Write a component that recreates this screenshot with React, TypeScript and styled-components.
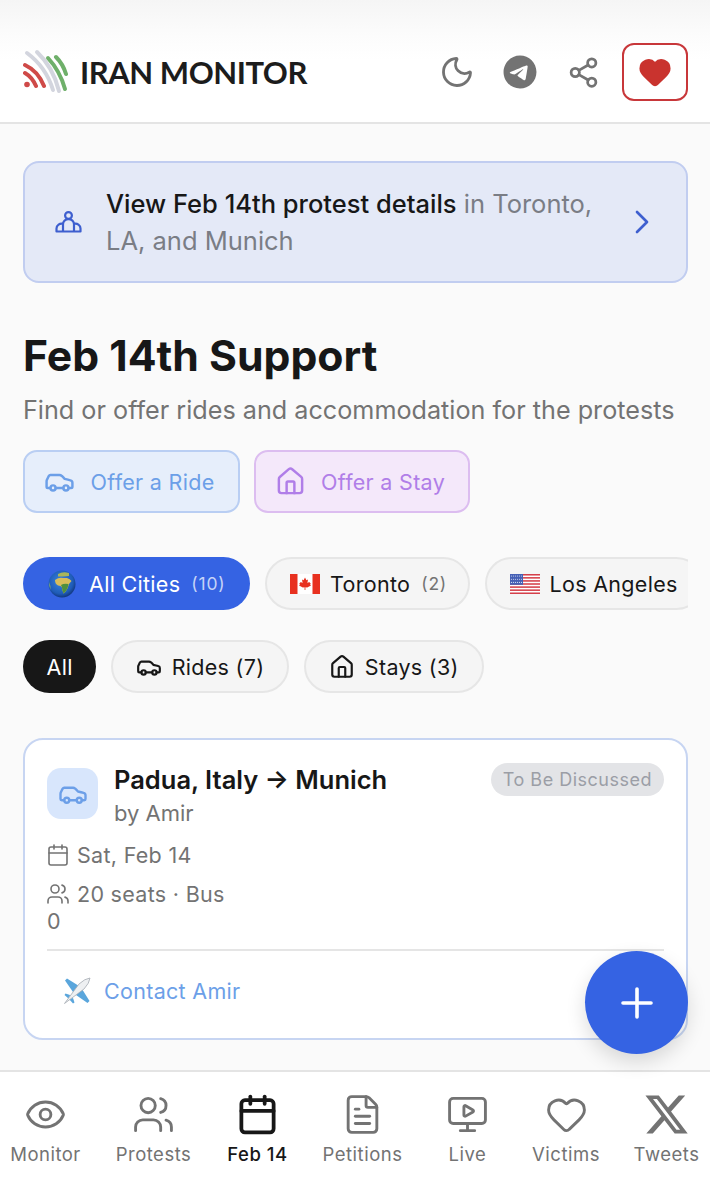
import React from 'react';
import styled, { createGlobalStyle } from 'styled-components';
import { Calendar, Car, ChevronRight, Eye, FileText, Heart, House, MonitorPlay, Moon, Plus, Share2, Users } from 'lucide-react';
import { FaTelegram, FaXTwitter } from 'react-icons/fa6';

const GlobalStyle = createGlobalStyle`
  html, body {
    margin: 0;
    padding: 0;
    background: #fafafa;
  }
  * {
    box-sizing: border-box;
  }
  svg {
    flex-shrink: 0;
  }
`;

const Page = styled.div`
  position: relative;
  width: 710px;
  height: 1200px;
  display: flex;
  flex-direction: column;
  overflow: hidden;
  background: #fafafa;
  font-family: Inter, "Liberation Sans", sans-serif;
  color: #171717;
`;

const Header = styled.header`
  height: 124px;
  flex-shrink: 0;
  display: flex;
  align-items: center;
  justify-content: space-between;
  padding: 22px 22px 0 23px;
  background: linear-gradient(#f5f5f5 0, #fcfcfc 36px, #fff 60px);
  border-bottom: 2px solid #e4e4e4;
`;

const Brand = styled.div`
  display: flex;
  align-items: center;
  gap: 12px;
`;

const BrandName = styled.span`
  font-family: Lato, sans-serif;
  font-size: 31px;
  font-weight: 700;
  letter-spacing: -0.45px;
  color: #1c1c1c;
`;

const HeaderActions = styled.div`
  display: flex;
  align-items: center;
`;

const HeaderIcon = styled.span`
  width: 30px;
  height: 38px;
  margin-right: 33px;
  display: flex;
  align-items: center;
  justify-content: center;
  color: #737373;

  &:nth-child(3) {
    margin-right: 24px;
  }
`;

const DonateButton = styled.button`
  width: 66px;
  height: 58px;
  display: flex;
  align-items: center;
  justify-content: center;
  padding: 0;
  background: #fff;
  border: 2px solid #c8373a;
  border-radius: 12px;
  color: #c9332e;
`;

const Main = styled.main`
  flex: 1;
  min-height: 0;
  padding: 37px 22px 0 23px;
`;

const Banner = styled.div`
  height: 122px;
  display: flex;
  align-items: center;
  padding: 0 24px 0 30px;
  background: #e4e9f7;
  border: 2px solid #c1cdf0;
  border-radius: 16px;
  color: #3e5fcf;
`;

const BannerText = styled.div`
  flex: 1;
  margin-left: 24px;
  font-size: 25.5px;
  line-height: 37px;
  color: #7a7d85;
`;

const BannerStrong = styled.span`
  font-weight: 500;
  color: #171717;
`;

const Title = styled.h1`
  margin: 48px 0 0;
  font-size: 42.7px;
  line-height: 50px;
  font-weight: 700;
  color: #171717;
`;

const Subtitle = styled.p`
  margin: 12px 0 0;
  font-size: 25.2px;
  line-height: 34px;
  color: #737373;
`;

const OfferRow = styled.div`
  display: flex;
  gap: 14px;
  margin-top: 23px;
`;

const OfferButton = styled.button<{ $tone: 'blue' | 'purple' }>`
  width: ${p => (p.$tone === 'blue' ? 217 : 216)}px;
  height: 63px;
  display: flex;
  align-items: center;
  justify-content: center;
  gap: 15px;
  padding: 0 4px 0 0;
  font-family: inherit;
  font-size: 21.5px;
  letter-spacing: 0.3px;
  border-radius: 14px;
  border: 2px solid ${p => (p.$tone === 'blue' ? '#b9cef3' : '#dcbdf0')};
  background: ${p => (p.$tone === 'blue' ? '#e6eefb' : '#f4e8fa')};
  color: ${p => (p.$tone === 'blue' ? '#6c9fe8' : '#b07ee8')};
`;

const CityRow = styled.div`
  display: flex;
  gap: 14.5px;
  margin-top: 44px;
  overflow: hidden;
`;

const TypeRow = styled.div`
  display: flex;
  gap: 14.5px;
  margin-top: 30px;
`;

const Chip = styled.button<{ $active?: 'blue' | 'black' }>`
  height: 53px;
  flex-shrink: 0;
  display: flex;
  align-items: center;
  gap: 10px;
  padding: 0 ${p => (p.$active === 'black' ? 21.5 : 23)}px;
  font-family: inherit;
  font-size: 21.5px;
  letter-spacing: 0.3px;
  border-radius: 27px;
  border: 2px solid ${p => (p.$active ? 'transparent' : '#e6e6e6')};
  background: ${p => (p.$active === 'blue' ? '#3563e3' : p.$active === 'black' ? '#171717' : '#f5f5f5')};
  color: ${p => (p.$active ? '#fff' : '#171717')};
`;

const ChipGlobe = styled.span`
  display: flex;
  margin-right: 3px;
`;

const ChipCount = styled.span<{ $light?: boolean }>`
  margin: 0 ${p => (p.$light ? 0 : -2)}px 0 1px;
  font-size: 17.5px;
  letter-spacing: 0.8px;
  color: ${p => (p.$light ? '#c6d3f7' : '#737373')};
`;

const Card = styled.article`
  position: relative;
  height: 302px;
  margin-top: 45px;
  padding: 23px 22px 0;
  background: #fff;
  border: 2px solid #c7d5f2;
  border-radius: 20px;
`;

const CardHead = styled.div`
  display: flex;
  align-items: flex-start;
  gap: 16px;
`;

const CardIcon = styled.div`
  width: 51px;
  height: 51px;
  margin-top: 5px;
  flex-shrink: 0;
  display: flex;
  align-items: center;
  justify-content: center;
  background: #d8e6fc;
  border-radius: 14px;
  color: #6c9fe8;
`;

const CardHeadText = styled.div`
  flex: 1;
`;

const CardTitle = styled.h2`
  margin: 0;
  font-size: 25.5px;
  line-height: 34px;
  font-weight: 600;
  color: #171717;
`;

const CardBy = styled.div`
  font-size: 22px;
  line-height: 32px;
  color: #737373;
`;

const StatusBadge = styled.span`
  height: 33px;
  padding: 0 12px;
  display: flex;
  align-items: center;
  font-size: 18px;
  letter-spacing: 0.5px;
  color: #9b9ea6;
  background: #e3e4e7;
  border-radius: 17px;
`;

const MetaRow = styled.div`
  display: flex;
  align-items: center;
  gap: 7px;
  margin: 8px 0 0 -1px;
  height: 31px;
  font-size: 21.5px;
  letter-spacing: 0.3px;
  color: #737373;

  &:nth-child(2) {
    margin-top: 10px;
  }
`;

const MetaRest = styled.div`
  font-size: 21.5px;
  line-height: 24px;
  color: #737373;
`;

const Divider = styled.div`
  height: 2px;
  margin-top: 16px;
  background: #e5e5e5;
`;

const ContactRow = styled.div`
  display: flex;
  align-items: center;
  gap: 12px;
  margin-top: 25px;
  padding-left: 15px;
  font-size: 21.5px;
  letter-spacing: 0.3px;
  color: #6c9fe8;
`;

const Fab = styled.button`
  position: absolute;
  left: 585px;
  top: 951px;
  width: 103px;
  height: 103px;
  display: flex;
  align-items: center;
  justify-content: center;
  padding: 0;
  border: none;
  border-radius: 50%;
  background: #3563e3;
  color: #fff;
  box-shadow: 0 8px 20px rgba(0, 0, 0, 0.14);
`;

const BottomNav = styled.nav`
  height: 130px;
  flex-shrink: 0;
  display: flex;
  padding-top: 19px;
  background: #fff;
  border-top: 2px solid #e4e4e4;
`;

const NavItem = styled.div<{ $width: number; $active?: boolean }>`
  width: ${p => p.$width}px;
  display: flex;
  flex-direction: column;
  align-items: center;
  gap: 5px;
  flex-shrink: 0;
  font-size: 18.5px;
  line-height: 24px;
  letter-spacing: 0.5px;
  font-weight: ${p => (p.$active ? 500 : 400)};
  color: ${p => (p.$active ? '#171717' : '#737373')};
`;

const NavGlyph = styled.span`
  height: 46px;
  display: flex;
  align-items: center;
  justify-content: center;
`;

function LogoMark() {
  return (
    <svg width="45" height="46" viewBox="22 50 45 46" fill="none" strokeWidth="4" strokeLinecap="round">
      <circle cx="26" cy="85.5" r="2.8" fill="#cf4a48" />
      <path d="M24 74 Q31 78 35 87" stroke="#cf4a48" />
      <path d="M24 66 Q37 72 43 87" stroke="#cf4a48" />
      <path d="M26 54 Q45 68 52 91" stroke="#d3d5de" />
      <path d="M36 53 Q52 68 58 92" stroke="#d3d5de" />
      <path d="M47 59 Q59 72 64 90" stroke="#6fb06a" />
      <path d="M55 58 Q62 65 65 75" stroke="#6fb06a" />
    </svg>
  );
}

function GatherIcon() {
  return (
    <svg width="27" height="22" viewBox="0 0 27 22" fill="none" stroke="currentColor" strokeWidth="2.2" strokeLinejoin="round">
      <circle cx="13.5" cy="4.5" r="3.4" />
      <path d="M1.5 20.5 v-3 a5 5 0 0 1 6.5-4.7 a5.6 5.6 0 0 1 11 0 a5 5 0 0 1 6.5 4.7 v3 Z" />
      <path d="M8 13 v7.5 M19 13 v7.5" />
    </svg>
  );
}

function GlobeIcon() {
  return (
    <svg width="28" height="28" viewBox="0 0 28 28">
      <defs>
        <radialGradient id="sea" cx="45%" cy="40%" r="65%">
          <stop offset="0" stopColor="#3a86e0" />
          <stop offset="0.7" stopColor="#1f5cb8" />
          <stop offset="1" stopColor="#0d2c6e" />
        </radialGradient>
      </defs>
      <circle cx="14" cy="14" r="13.5" fill="url(#sea)" />
      <path d="M10 4 Q15 1 21 3 L21 6 L15 6.5 L10 6.5 Z" fill="#a9b65a" />
      <path d="M7 10 Q11 7 15 8 L19 8 Q22 9 23.5 11 L21 14 Q20 18 18 21 L15.5 23.5 Q14 20 14 17.5 Q13 15.5 10 15.5 Q7 14 7 10 Z" fill="#d8bd5a" />
      <path d="M13 15 Q16 13 20.5 14 Q20 18 18 21 L15.5 23.5 Q14 20 14 17.5 Z" fill="#4f8f3e" />
      <path d="M1 12 Q3 16 2.5 20 Q1 16 1 12 Z" fill="#8fb262" />
    </svg>
  );
}

function CanadaFlag() {
  return (
    <svg width="30" height="20" viewBox="0 0 30 20">
      <rect width="30" height="20" fill="#fff" />
      <rect width="7.5" height="20" fill="#e8301f" />
      <rect x="22.5" width="7.5" height="20" fill="#e8301f" />
      <path d="M15 3.5 L16.4 6.2 L18 5.5 L17.4 9 L19.2 8 L20.8 9.8 L20 10.6 L21 11.6 L17.2 13.4 L15.4 13.2 L15.4 16 L14.6 16 L14.6 13.2 L12.8 13.4 L9 11.6 L10 10.6 L9.2 9.8 L10.8 8 L12.6 9 L12 5.5 L13.6 6.2 Z" fill="#e8301f" />
    </svg>
  );
}

function UsaFlag() {
  const stripes = [0, 1, 2, 3, 4, 5, 6];
  const stars = [0, 1, 2, 3, 4, 5];
  return (
    <svg width="30" height="20" viewBox="0 0 30 20">
      <rect width="30" height="20" fill="#fff" />
      {stripes.map(i => (
        <rect key={i} y={i * 3.08} width="30" height="1.54" fill="#d5404a" />
      ))}
      <rect width="13" height="10.8" fill="#4660b5" />
      {stars.map(i =>
        [0, 1, 2].map(j => <circle key={`${i}-${j}`} cx={1.4 + i * 2} cy={2 + j * 3.2} r="0.55" fill="#dfe6f8" />)
      )}
    </svg>
  );
}

function PlaneIcon() {
  return (
    <svg width="30" height="30" viewBox="0 0 30 30">
      <path d="M17 10 L5 2.5 L3 4.5 L11 16 Z" fill="#5aa6dc" />
      <path d="M20 13 L27.5 25 L25.5 27 L14 19 Z" fill="#5aa6dc" />
      <path d="M8 19 L3.5 17.5 L2.5 19 L7 23 Z M11 22 L12.5 26.5 L11 27.5 L7 23 Z" fill="#5aa6dc" />
      <path d="M2.5 27.5 L17 8 Q23 2.5 28 2 Q27.5 7 22 13 Z" fill="#eef0f2" stroke="#a4abb2" strokeWidth="0.8" strokeLinejoin="round" />
    </svg>
  );
}

const navItems = [
  { label: 'Monitor', width: 91, icon: <Eye size={43} strokeWidth={1.6} /> },
  { label: 'Protests', width: 125, icon: <Users size={43} strokeWidth={1.6} /> },
  { label: 'Feb 14', width: 83, active: true, icon: <Calendar size={43} strokeWidth={2.1} /> },
  { label: 'Petitions', width: 127, icon: <FileText size={43} strokeWidth={1.6} /> },
  { label: 'Live', width: 83, icon: <MonitorPlay size={43} strokeWidth={1.6} /> },
  { label: 'Victims', width: 114, icon: <Heart size={43} strokeWidth={1.6} /> },
  { label: 'Tweets', width: 87, icon: <FaXTwitter size={47} /> },
];

export default function App() {
  return (
    <Page>
      <GlobalStyle />
      <Header>
        <Brand>
          <LogoMark />
          <BrandName>IRAN MONITOR</BrandName>
        </Brand>
        <HeaderActions>
          <HeaderIcon><Moon size={36} strokeWidth={1.9} /></HeaderIcon>
          <HeaderIcon><FaTelegram size={34} /></HeaderIcon>
          <HeaderIcon><Share2 size={33} strokeWidth={2} /></HeaderIcon>
          <DonateButton><Heart size={34} fill="currentColor" strokeWidth={2} /></DonateButton>
        </HeaderActions>
      </Header>

      <Main>
        <Banner>
          <GatherIcon />
          <BannerText>
            <BannerStrong>View Feb 14th protest details</BannerStrong> in Toronto, LA, and Munich
          </BannerText>
          <ChevronRight size={40} strokeWidth={1.6} />
        </Banner>

        <Title>Feb 14th Support</Title>
        <Subtitle>Find or offer rides and accommodation for the protests</Subtitle>

        <OfferRow>
          <OfferButton $tone="blue"><Car size={31} strokeWidth={1.9} />Offer a Ride</OfferButton>
          <OfferButton $tone="purple"><House size={31} strokeWidth={1.9} />Offer a Stay</OfferButton>
        </OfferRow>

        <CityRow>
          <Chip $active="blue"><ChipGlobe><GlobeIcon /></ChipGlobe>All Cities<ChipCount $light>(10)</ChipCount></Chip>
          <Chip><CanadaFlag />Toronto<ChipCount>(2)</ChipCount></Chip>
          <Chip><UsaFlag />Los Angeles</Chip>
        </CityRow>

        <TypeRow>
          <Chip $active="black">All</Chip>
          <Chip><Car size={26} strokeWidth={2} />Rides (7)</Chip>
          <Chip><House size={26} strokeWidth={2} />Stays (3)</Chip>
        </TypeRow>

        <Card>
          <CardHead>
            <CardIcon><Car size={30} strokeWidth={1.9} /></CardIcon>
            <CardHeadText>
              <CardTitle>Padua, Italy → Munich</CardTitle>
              <CardBy>by Amir</CardBy>
            </CardHeadText>
            <StatusBadge>To Be Discussed</StatusBadge>
          </CardHead>
          <MetaRow><Calendar size={24} strokeWidth={1.6} />Sat, Feb 14</MetaRow>
          <MetaRow><Users size={24} strokeWidth={1.6} />20 seats · Bus</MetaRow>
          <MetaRest>0</MetaRest>
          <Divider />
          <ContactRow><PlaneIcon />Contact Amir</ContactRow>
        </Card>
      </Main>

      <Fab><Plus size={48} strokeWidth={1.8} /></Fab>

      <BottomNav>
        {navItems.map(item => (
          <NavItem key={item.label} $width={item.width} $active={item.active}>
            <NavGlyph>{item.icon}</NavGlyph>
            {item.label}
          </NavItem>
        ))}
      </BottomNav>
    </Page>
  );
}
